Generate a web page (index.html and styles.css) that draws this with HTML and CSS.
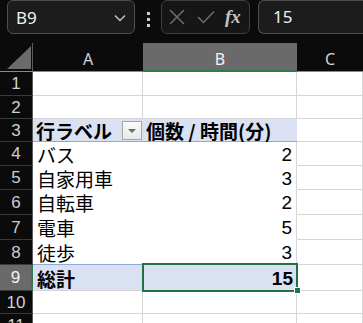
FILE: index.html
```html
<!DOCTYPE html>
<html lang="ja">
<head>
  <meta charset="UTF-8">
  <meta name="viewport" content="width=device-width, initial-scale=1.0">
  <title>Pivot</title>
  <link rel="stylesheet" href="styles.css">
</head>
<body>
  <div class="toolbar">
    <div class="namebox">
      <span>B9</span>
      <svg class="chev" width="12" height="8" viewBox="0 0 12 8"><path d="M1 1.5 L6 6.5 L11 1.5" fill="none" stroke="#c8c8c8" stroke-width="1.4"/></svg>
    </div>
    <div class="dots"><i></i><i></i><i></i></div>
    <div class="fxbox">
      <svg width="16" height="16" viewBox="0 0 16 16"><path d="M1 1 L15 15 M15 1 L1 15" stroke="#6e6e6e" stroke-width="1.5"/></svg>
      <svg width="18" height="14" viewBox="0 0 18 14"><path d="M1 7 L6.5 12.5 L17 1.5" fill="none" stroke="#6e6e6e" stroke-width="1.5"/></svg>
      <span class="fx">fx</span>
    </div>
    <div class="formula">15</div>
  </div>

  <div class="sheet">
    <div class="corner"><svg width="24" height="23" viewBox="0 0 24 23"><polygon points="0,23 24,23 24,0" fill="#6b6b6b"/></svg></div>
    <div class="colhead">A</div>
    <div class="colhead sel">B</div>
    <div class="colhead">C</div>

    <div class="rowhead">1</div><div class="cell"></div><div class="cell"></div><div class="cell"></div>
    <div class="rowhead">2</div><div class="cell"></div><div class="cell"></div><div class="cell"></div>
    <div class="rowhead">3</div>
    <div class="cell head">行ラベル<span class="filter"></span></div>
    <div class="cell head">個数 / 時間(分)</div>
    <div class="cell"></div>

    <div class="rowhead">4</div><div class="cell item">バス</div><div class="cell item num">2</div><div class="cell"></div>
    <div class="rowhead">5</div><div class="cell item">自家用車</div><div class="cell item num">3</div><div class="cell"></div>
    <div class="rowhead">6</div><div class="cell item">自転車</div><div class="cell item num">2</div><div class="cell"></div>
    <div class="rowhead">7</div><div class="cell item">電車</div><div class="cell item num">5</div><div class="cell"></div>
    <div class="rowhead">8</div><div class="cell item">徒歩</div><div class="cell item num">3</div><div class="cell"></div>

    <div class="rowhead sel">9</div>
    <div class="cell total">総計</div>
    <div class="cell total num active">15</div>
    <div class="cell"></div>

    <div class="rowhead">10</div><div class="cell"></div><div class="cell"></div><div class="cell"></div>
    <div class="rowhead">11</div><div class="cell"></div><div class="cell"></div><div class="cell"></div>
  </div>
</body>
</html>
```

FILE: styles.css
```css
body {
  margin: 0;
  background: #0b0b0b;
  font-family: "Noto Sans", "Liberation Sans", sans-serif;
  overflow: hidden;
  height: 323px;
}
.toolbar {
  display: flex;
  align-items: flex-start;
  height: 43px;
  padding-left: 7px;
}
.namebox {
  width: 110px;
  height: 32px;
  border: 1px solid #4e4e4e;
  border-radius: 6px;
  background: #1c1c1c;
  display: flex;
  align-items: center;
  justify-content: space-between;
  padding: 0 8px;
  color: #f0f0f0;
  font-size: 17px;
}
.chev {
  margin-top: 2px;
}
.dots {
  width: 26px;
  display: flex;
  flex-direction: column;
  align-items: center;
  gap: 3px;
  padding-top: 12px;
}
.dots i {
  width: 3px;
  height: 3px;
  background: #cfcfcf;
}
.fxbox {
  width: 89px;
  height: 34px;
  border: 1px solid #3e3e3e;
  border-radius: 6px;
  background: #161616;
  display: flex;
  align-items: center;
  gap: 12px;
  padding-left: 7px;
  box-sizing: border-box;
}
.fx {
  font-family: "Liberation Serif", serif;
  font-style: italic;
  font-weight: bold;
  font-size: 19px;
  color: #c4c4c4;
  margin-left: -2px;
}
.formula {
  margin-left: 8px;
  flex: 1;
  height: 32px;
  border: 1px solid #4e4e4e;
  border-right: none;
  border-radius: 6px 0 0 6px;
  background: #1c1c1c;
  color: #f0f0f0;
  font-size: 17px;
  line-height: 32px;
  padding-left: 14px;
}
.sheet {
  display: grid;
  grid-template-columns: 33px 110px 154px 1fr;
  grid-template-rows: 29px 24px 23px 23px 24px 24px 25px 25px 25px 26px 23px 24px;
}
.corner {
  border-right: 1px solid #5a5a5a;
  border-bottom: 1px solid #8a8a8a;
  display: flex;
  align-items: flex-end;
  justify-content: flex-end;
  padding: 0 1px 2px 0;
}
.colhead {
  background: #0b0b0b;
  color: #d4d4d4;
  font-size: 16px;
  display: flex;
  align-items: center;
  justify-content: center;
  border-bottom: 1px solid #8a8a8a;
  padding-top: 4px;
}
.colhead.sel {
  background: #6a6a6a;
  color: #f4f4f4;
  border-bottom: 2px solid #2f7d4e;
}
.rowhead {
  background: #0b0b0b;
  color: #cfcfcf;
  font-family: "Liberation Sans", sans-serif;
  font-size: 17px;
  line-height: 1;
  display: flex;
  align-items: center;
  justify-content: center;
  border-bottom: 1px solid #3a3a3a;
  border-right: 1px solid #5a5a5a;
}
.rowhead.sel {
  background: #6a6a6a;
  color: #f4f4f4;
  border-right: 2px solid #2f7d4e;
}
.cell {
  background: #fff;
  border-right: 1px solid #d6d6d6;
  border-bottom: 1px solid #d6d6d6;
  font-family: "Noto Sans CJK JP", sans-serif;
  font-size: 19px;
  line-height: 1;
  color: #000;
  display: flex;
  align-items: center;
  padding: 1px 4px 0;
  white-space: nowrap;
  position: relative;
}
.cell.head {
  background: #d9e1f2;
  font-weight: bold;
  border-right: none;
  border-bottom: 1px solid #8ea9db;
  padding-left: 3px;
}
.cell.item {
  border-right-color: #fff;
  border-bottom-color: #fff;
}
.cell.item.num {
  border-right-color: #d6d6d6;
}
.num {
  justify-content: flex-end;
  font-family: "Liberation Sans", sans-serif;
}
.cell.total {
  background: #d9e1f2;
  font-weight: bold;
  border-right: none;
  border-top: 1px solid #8ea9db;
  border-bottom-color: #d6d6d6;
  margin-top: -1px;
}
.filter {
  position: absolute;
  right: 1px;
  top: 2px;
  width: 18px;
  height: 17px;
  border: 1px solid #a6a6a6;
  background: linear-gradient(#fafafa, #e8e8e8);
}
.filter::after {
  content: "";
  position: absolute;
  left: 5px;
  top: 7px;
  border-left: 4px solid transparent;
  border-right: 4px solid transparent;
  border-top: 4px solid #6b6b6b;
}
.active {
  outline: 2px solid #217346;
  outline-offset: -1px;
  z-index: 1;
}
.active::after {
  content: "";
  position: absolute;
  right: -4px;
  bottom: -4px;
  width: 5px;
  height: 5px;
  background: #217346;
  border: 1px solid #fff;
}
```
